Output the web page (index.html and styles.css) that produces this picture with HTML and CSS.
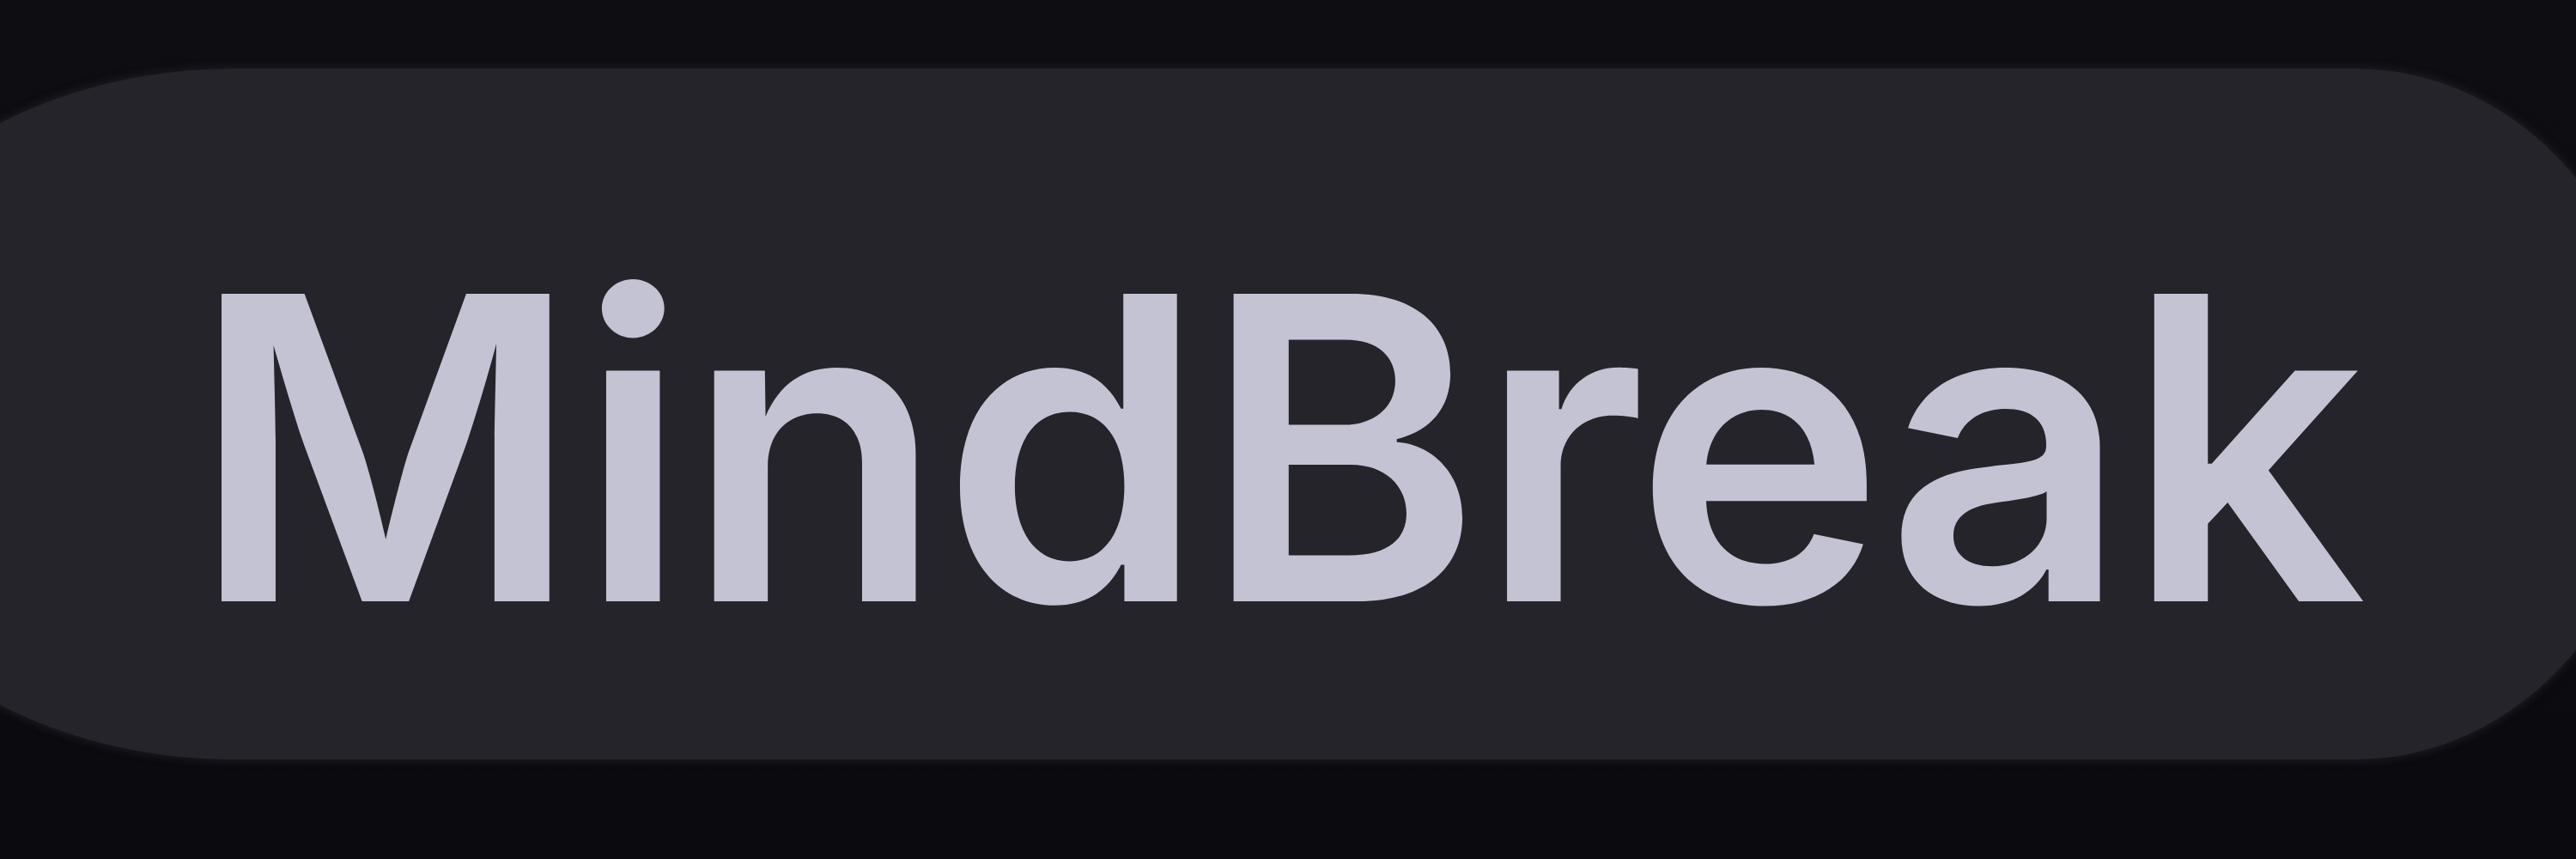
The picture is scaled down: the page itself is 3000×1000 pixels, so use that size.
FILE: index.html
```html
<!DOCTYPE html>
<html>
<head>
<meta charset="utf-8">
<link rel="stylesheet" href="styles.css">
</head>
<body>
<div class="stage">
  <div class="pill">
    <span class="brand">MindBreak</span>
  </div>
</div>
</body>
</html>
```

FILE: styles.css
```css
html, body {
  margin: 0;
  padding: 0;
  background: #0c0b10;
  overflow: hidden;
}
.stage {
  width: 3000px;
  height: 1000px;
  overflow: hidden;
  padding-top: 80px;
  box-sizing: border-box;
  background: linear-gradient(#0e0d12, #0b0a0f);
}
.pill {
  margin-left: -230px;
  width: 3324px;
  height: 804px;
  box-sizing: border-box;
  padding-top: 195px;
  padding-left: 452px;
  background: #25242b;
  border-top-left-radius: 500px 400px;
  border-bottom-left-radius: 500px 400px;
  border-top-right-radius: 350px 400px;
  border-bottom-right-radius: 350px 400px;
  box-shadow: 0 0 8px 3px rgba(37, 36, 43, 0.55);
}
.brand {
  display: block;
  font-family: Inter, "Liberation Sans", Arial, sans-serif;
  font-weight: 600;
  font-size: 492px;
  line-height: 1;
  letter-spacing: -3px;
  color: #c4c3d3;
  white-space: nowrap;
}
```
